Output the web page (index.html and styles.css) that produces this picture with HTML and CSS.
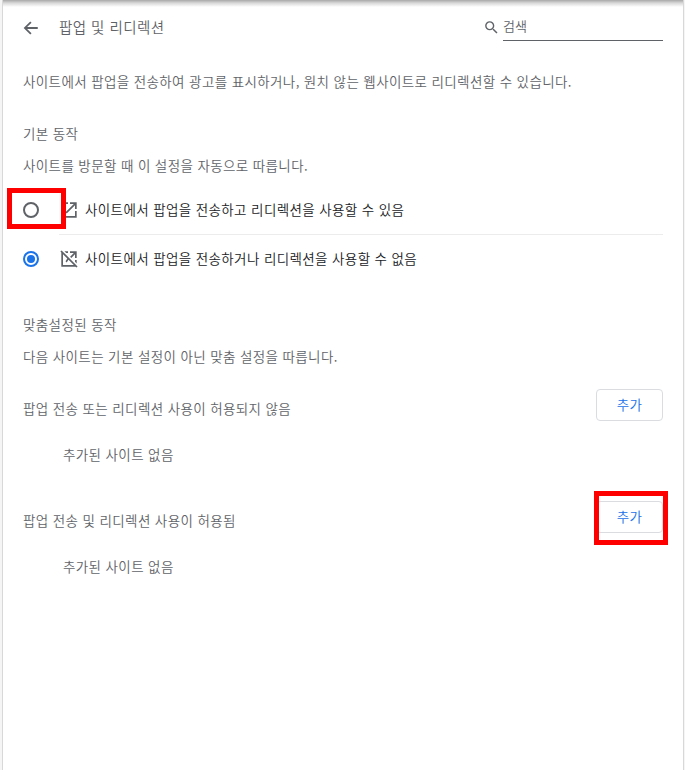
FILE: index.html
```
<!DOCTYPE html>
<html lang="ko">
<head>
    <meta charset="UTF-8">
    <meta name="viewport" content="width=device-width, initial-scale=1.0">
    <title>팝업 및 리디렉션</title>
    <link rel="stylesheet" href="styles.css">
</head>
<body>
    <div class="page">
        <header class="header">
            <svg class="back" viewBox="0 0 24 24"><path d="M21 10.8H6.83l5.9-5.9L11 3.2 2.2 12l8.8 8.8 1.73-1.7-5.9-5.9H21z"/></svg>
            <h1>팝업 및 리디렉션</h1>
            <div class="search">
                <svg viewBox="0 0 24 24"><path d="M15.5 14h-.79l-.28-.27A6.471 6.471 0 0 0 16 9.5 6.5 6.5 0 1 0 9.5 16c1.61 0 3.09-.59 4.23-1.57l.27.28v.79l5 4.99L20.49 19l-4.99-5zm-6 0C7.01 14 5 11.99 5 9.5S7.01 5 9.5 5 14 7.01 14 9.5 11.99 14 9.5 14z"/></svg>
                <span class="search-input">검색</span>
            </div>
        </header>

        <p class="intro">사이트에서 팝업을 전송하여 광고를 표시하거나, 원치 않는 웹사이트로 리디렉션할 수 있습니다.</p>

        <section class="default-section">
            <h2>기본 동작</h2>
            <p class="desc">사이트를 방문할 때 이 설정을 자동으로 따릅니다.</p>
            <div class="option">
                <span class="radio"></span>
                <div class="option-body divided">
                    <svg viewBox="0 0 18 18"><path d="M15 15H3V3h5V1.300H1.300v15.400h15.400V10H15v5zM10 1.300V3h3.800L5.500 11.300l1.200 1.200L15 4.200V8h1.700V1.300H10z"/></svg>
                    <span class="option-label">사이트에서 팝업을 전송하고 리디렉션을 사용할 수 있음</span>
                </div>
                <span class="highlight highlight-radio"></span>
            </div>
            <div class="option">
                <span class="radio checked"></span>
                <div class="option-body">
                    <svg viewBox="0 0 18 18">
                        <path d="M4.500 1.300H8V3H6.200zM10 1.300h6.700V8H15V4.200l-3.700 3.700-1.200-1.200L13.800 3H10zM15 10h1.700v3.500L15 11.800z"/>
                        <path d="M1.600.4.4 1.600l.9.9v14.200h14.200l.9.9 1.200-1.200zM3 4.200l4.300 4.300-1.800 2.800 1.200 1.200 1.800-2.800 5.300 5.300H3z"/>
                    </svg>
                    <span class="option-label">사이트에서 팝업을 전송하거나 리디렉션을 사용할 수 없음</span>
                </div>
            </div>
        </section>

        <section class="custom-section">
            <h2>맞춤설정된 동작</h2>
            <p class="desc">다음 사이트는 기본 설정이 아닌 맞춤 설정을 따릅니다.</p>
            <div class="list-header">
                <h3>팝업 전송 또는 리디렉션 사용이 허용되지 않음</h3>
                <button class="add">추가</button>
            </div>
            <p class="empty">추가된 사이트 없음</p>
            <div class="list-header">
                <h3>팝업 전송 및 리디렉션 사용이 허용됨</h3>
                <button class="add">추가</button>
                <span class="highlight highlight-add"></span>
            </div>
            <p class="empty">추가된 사이트 없음</p>
        </section>
    </div>
</body>
</html>
```
FILE: styles.css
```
* {
    box-sizing: border-box;
}

body {
    margin: 0;
    background: #f5f5f5;
    color: #5f6368;
    font-family: "Noto Sans CJK KR", sans-serif;
    font-size: 13.5px;
    font-weight: 350;
    line-height: 20px;
    letter-spacing: 0.38px;
    white-space: nowrap;
    overflow: hidden;
}

h1, h2, h3, p {
    margin: 0;
    font-size: inherit;
    font-weight: inherit;
}

svg {
    display: block;
    flex: none;
    fill: #5f6368;
}

.page {
    height: 770px;
    margin: 0 1px 0 2px;
    padding: 0 20px;
    border-left: 1px solid #d8d8d8;
    border-right: 1px solid #d8d8d8;
    background: linear-gradient(#a8a8a8, #d8d8d8 3px, #fff 7px) no-repeat #fff;
}

.header {
    display: flex;
    align-items: center;
    height: 55px;
}

.back {
    width: 18px;
    height: 18px;
    margin-left: -1px;
}

.header h1 {
    margin-left: 19px;
    padding-bottom: 2px;
    font-size: 14.5px;
    letter-spacing: 0.45px;
}

.search {
    display: flex;
    align-items: center;
    margin-left: auto;
}

.search svg {
    width: 17px;
    height: 17px;
    margin-right: 3px;
}

.search-input {
    width: 160px;
    height: 27px;
    padding-top: 2px;
    border-bottom: 1px solid #5f6368;
    font-size: 13px;
    letter-spacing: 0;
}

.intro {
    margin-top: 16px;
}

.default-section {
    margin-top: 32px;
}

.desc {
    margin-top: 12px;
}

.default-section .desc {
    margin-bottom: 11px;
}

.option {
    position: relative;
    display: flex;
    align-items: center;
    height: 49px;
    color: #202124;
}

.radio {
    width: 16px;
    height: 16px;
    margin-bottom: 1px;
    border: 2px solid #5f6368;
    border-radius: 50%;
}

.radio.checked {
    padding: 2px;
    border-color: #1a73e8;
    background: #1a73e8 content-box;
}

.option-body {
    display: flex;
    flex: 1;
    align-items: center;
    height: 49px;
    margin-left: 20px;
    border-bottom: 1px solid transparent;
}

.option-body.divided {
    border-bottom-color: #ececec;
}

.option-body svg {
    width: 18px;
    height: 18px;
    margin: 0 7px 0 1px;
}

.option-label {
    padding-bottom: 2px;
}

.custom-section {
    margin-top: 30px;
}

.list-header {
    position: relative;
    display: flex;
    justify-content: space-between;
    align-items: center;
    height: 32px;
    margin-top: 23px;
}

.list-header h3 {
    padding-top: 6px;
}

.empty {
    margin: 23px 0 37px 40px;
}

.add {
    width: 67px;
    height: 32px;
    padding: 0 0 2px;
    border: 1px solid #dadce0;
    border-radius: 4px;
    background: #fff;
    color: #1a73e8;
    font: inherit;
    letter-spacing: inherit;
}

/* red markers around the controls to click */
.highlight {
    position: absolute;
    border: 5px solid #f00;
}

.highlight-radio {
    left: -16px;
    top: 2px;
    width: 59px;
    height: 41px;
}

.highlight-add {
    right: -5px;
    top: -10px;
    width: 74px;
    height: 54px;
}
```
